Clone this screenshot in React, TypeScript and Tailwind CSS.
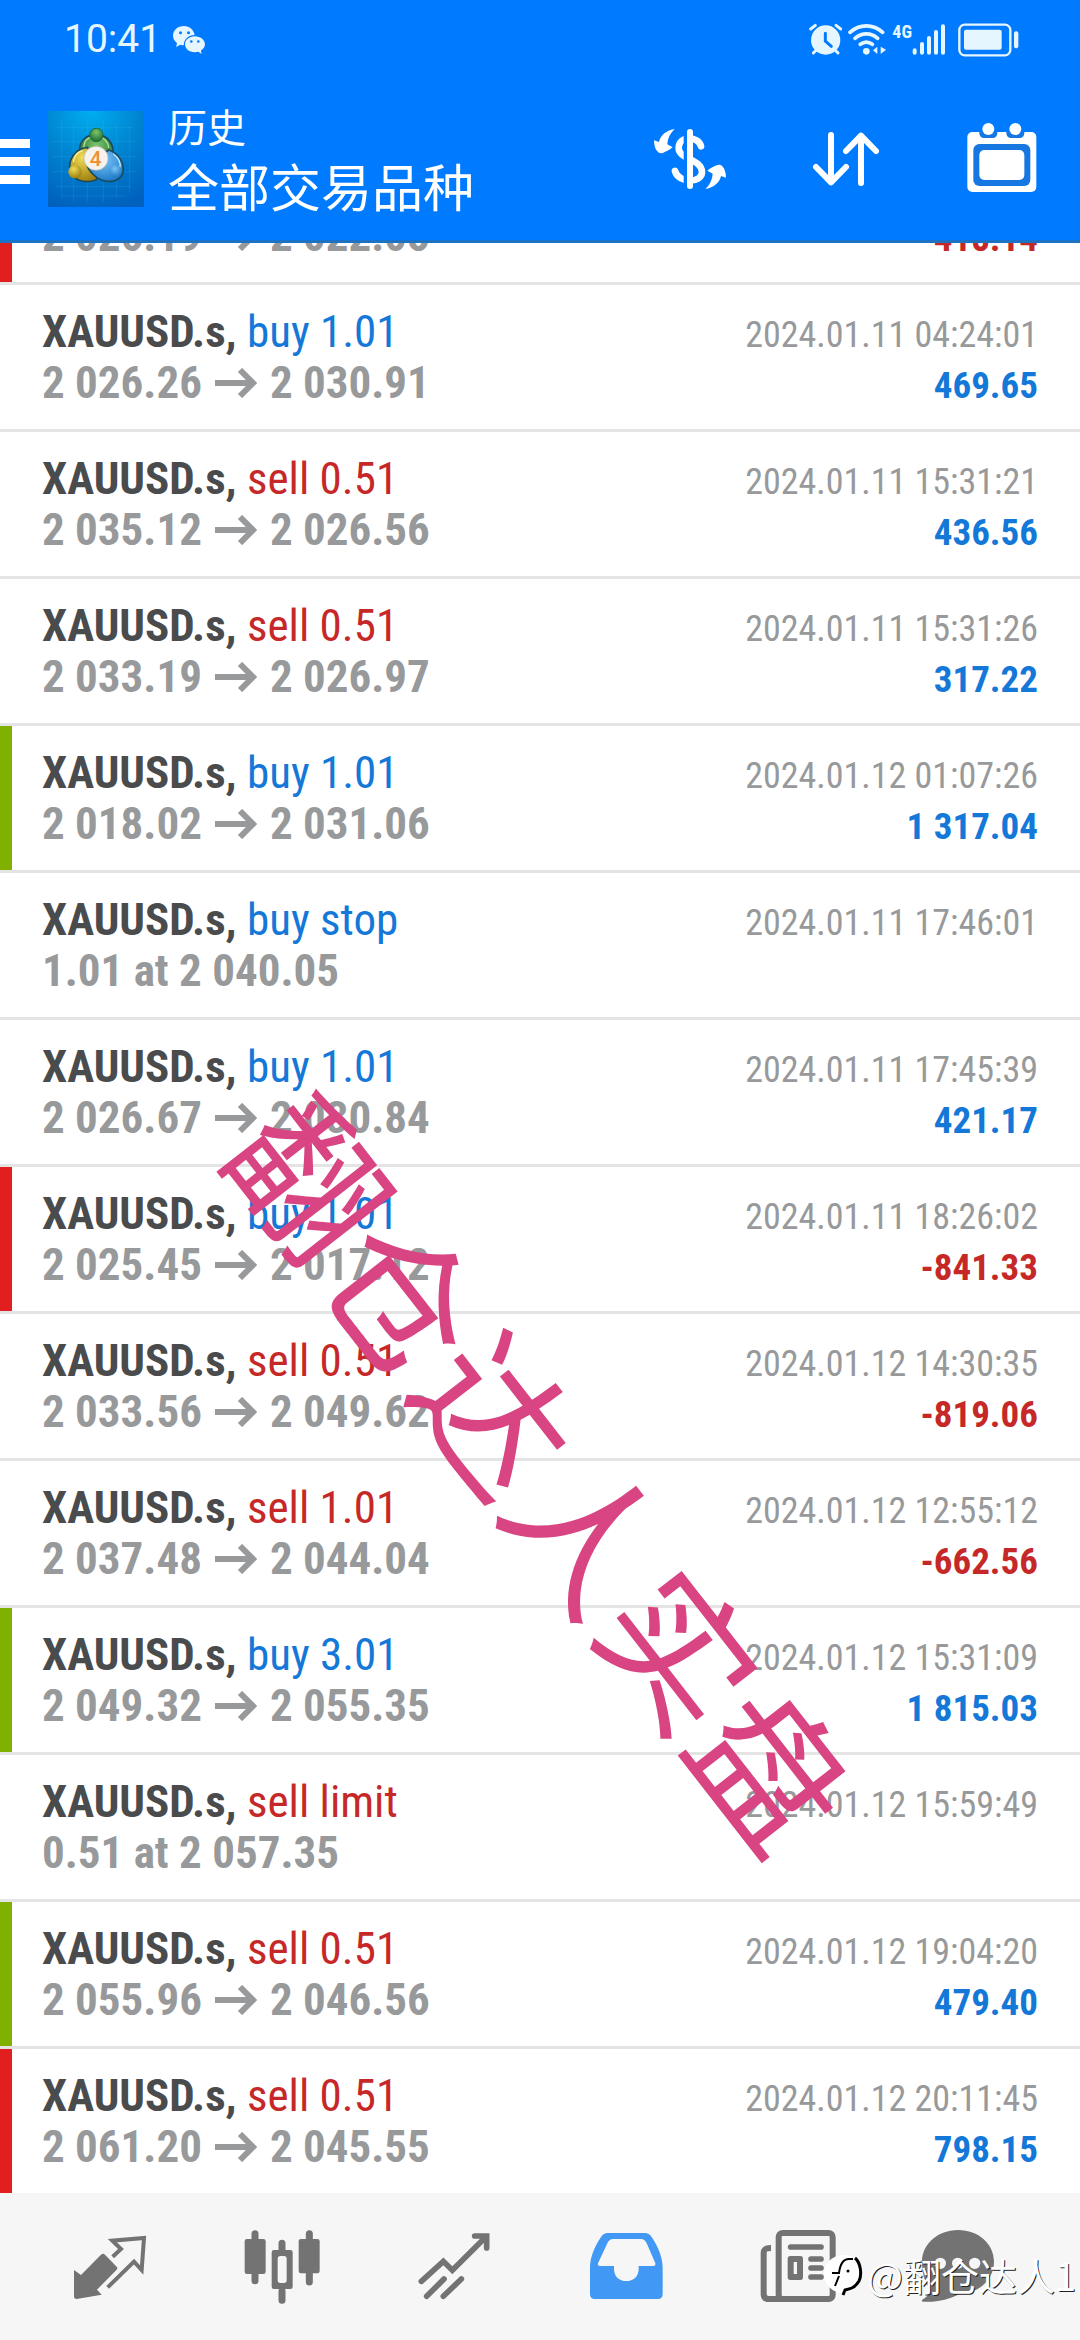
import type { ReactNode } from "react";

interface HistoryRow {
  id: number;
  side: string;
  tone: "buy" | "sell";
  from?: string;
  to?: string;
  note?: string;
  time: string;
  profit?: string;
  mark?: "tp" | "sl";
}

const history: HistoryRow[] = [
  { id: 1, side: "buy 1.01", tone: "buy", from: "2 026.19", to: "2 022.05", time: "2024.01.11 04:23:14", profit: "-418.14", mark: "sl" },
  { id: 2, side: "buy 1.01", tone: "buy", from: "2 026.26", to: "2 030.91", time: "2024.01.11 04:24:01", profit: "469.65" },
  { id: 3, side: "sell 0.51", tone: "sell", from: "2 035.12", to: "2 026.56", time: "2024.01.11 15:31:21", profit: "436.56" },
  { id: 4, side: "sell 0.51", tone: "sell", from: "2 033.19", to: "2 026.97", time: "2024.01.11 15:31:26", profit: "317.22" },
  { id: 5, side: "buy 1.01", tone: "buy", from: "2 018.02", to: "2 031.06", time: "2024.01.12 01:07:26", profit: "1 317.04", mark: "tp" },
  { id: 6, side: "buy stop", tone: "buy", note: "1.01 at 2 040.05", time: "2024.01.11 17:46:01" },
  { id: 7, side: "buy 1.01", tone: "buy", from: "2 026.67", to: "2 030.84", time: "2024.01.11 17:45:39", profit: "421.17" },
  { id: 8, side: "buy 1.01", tone: "buy", from: "2 025.45", to: "2 017.12", time: "2024.01.11 18:26:02", profit: "-841.33", mark: "sl" },
  { id: 9, side: "sell 0.51", tone: "sell", from: "2 033.56", to: "2 049.62", time: "2024.01.12 14:30:35", profit: "-819.06" },
  { id: 10, side: "sell 1.01", tone: "sell", from: "2 037.48", to: "2 044.04", time: "2024.01.12 12:55:12", profit: "-662.56" },
  { id: 11, side: "buy 3.01", tone: "buy", from: "2 049.32", to: "2 055.35", time: "2024.01.12 15:31:09", profit: "1 815.03", mark: "tp" },
  { id: 12, side: "sell limit", tone: "sell", note: "0.51 at 2 057.35", time: "2024.01.12 15:59:49" },
  { id: 13, side: "sell 0.51", tone: "sell", from: "2 055.96", to: "2 046.56", time: "2024.01.12 19:04:20", profit: "479.40", mark: "tp" },
  { id: 14, side: "sell 0.51", tone: "sell", from: "2 061.20", to: "2 045.55", time: "2024.01.12 20:11:45", profit: "798.15", mark: "sl" },
];

const StatusBar = () => (
  <div className="flex h-[75px] items-center justify-between pl-16 pr-[60px] pt-1 text-[#e6f6ff]">
    <div className="flex items-center gap-3">
      <span className="font-[Roboto,sans-serif] text-[39px] leading-none">10:41</span>
      <svg className="h-7 w-8" viewBox="0 0 32 28" fill="currentColor">
        <path d="M11 0C4.900 0 0 4.200 0 9.600c0 3 1.500 5.600 4 7.400L3.200 21l4-2.200c1.200.4 2.500.5 3.600.5C10.500 13.500 15.500 9 21.600 9 20.800 3.800 16.400 0 11 0z" />
        <path d="M21.700 10.200C16 10.200 12 13.900 12 18.300s4.200 8 9.700 8c1.300 0 2.500-.2 3.600-.5L28.600 28l-.7-3.600c2.500-1.500 4.100-3.700 4.100-6.200 0-4.400-4.700-8-10.300-8z" />
        <g fill="#007aff">
          <circle cx="7.500" cy="6.700" r="1.500" />
          <circle cx="15.500" cy="6.700" r="1.500" />
          <circle cx="18.300" cy="15.500" r="1.300" />
          <circle cx="25.300" cy="15.500" r="1.300" />
        </g>
      </svg>
    </div>
    <div className="flex items-center">
      <svg className="mr-1 h-9 w-9" viewBox="496 29 108 108" fill="none" strokeLinecap="round">
        <circle cx="549" cy="83" r="44" fill="currentColor" />
        <path d="M504 50l14-11M594 50l-14-11M512 122l12-12M586 122l-12-12" stroke="currentColor" strokeWidth="9" />
        <path d="M548 63v23l18 16" stroke="#007aff" strokeWidth="9" />
      </svg>
      <svg className="mr-1 h-9 w-10" viewBox="626 29 120 108" fill="none" stroke="currentColor" strokeWidth="11" strokeLinecap="round">
        <path d="M632 60C660 34 702 34 730 60M647 78c20-18 48-18 68 0M663 96c12-9 24-9 36 0" />
        <circle cx="681" cy="117" r="10" fill="currentColor" stroke="none" />
        <path d="M714 103v22l-13-11zM724 103v22l16-13z" fill="currentColor" stroke="none" />
      </svg>
      <span className="mb-4 font-['Roboto_Condensed',sans-serif] text-[18px] font-bold leading-none">4G</span>
      <svg className="mr-3 h-9 w-[34px]" viewBox="813 29 102 108" stroke="currentColor" strokeWidth="12" strokeLinecap="round">
        <path d="M821 114v7M843 95v26M864 77v44M885 59v62M906 42v79" />
      </svg>
      <svg className="h-9 w-[62px]" viewBox="948 29 186 108" fill="none">
        <rect x="952" y="37" width="153" height="92" rx="16" stroke="currentColor" strokeWidth="7" />
        <rect x="966" y="52" width="113" height="60" rx="6" fill="currentColor" />
        <rect x="1116" y="57" width="13" height="51" rx="6" fill="currentColor" />
      </svg>
    </div>
  </div>
);

const Logo = () => (
  <svg className="ml-[18px] size-24 shrink-0" viewBox="144 63 288 288" role="img" aria-label="MetaTrader 4">
    <defs>
      <radialGradient id="sky" cx="45%" cy="0%" r="105%">
        <stop offset="0" stopColor="#00aef0" />
        <stop offset="0.5" stopColor="#0083cf" />
        <stop offset="1" stopColor="#0060bd" />
      </radialGradient>
      <radialGradient id="green" cx="50%" cy="30%" r="70%">
        <stop offset="0" stopColor="#7cc56c" />
        <stop offset="1" stopColor="#1d6b32" />
      </radialGradient>
      <radialGradient id="gold" cx="40%" cy="30%" r="70%">
        <stop offset="0" stopColor="#efdc55" />
        <stop offset="1" stopColor="#a08010" />
      </radialGradient>
      <radialGradient id="blue" cx="45%" cy="30%" r="70%">
        <stop offset="0" stopColor="#7cc4f6" />
        <stop offset="1" stopColor="#1f7cc9" />
      </radialGradient>
    </defs>
    <rect x="144" y="63" width="288" height="288" fill="url(#sky)" />
    <path d="M165 112h235M155 155h250M155 200h250M155 245h250M165 290h230M185 318h190M185 85v240M220 100v235M262 90v245M310 90v245M350 100v225M388 110v200" stroke="#4cc0f2" strokeOpacity="0.25" strokeWidth="2" />
    <g stroke="#1c4a5c" strokeWidth="5">
      <path d="M240 190c-6-34 16-56 49-56s58 30 48 66c-6 22-16 34-28 42z" fill="url(#green)" />
      <path d="M262 172c-34 4-58 34-52 68 6 30 42 42 78 30l14-34z" fill="url(#gold)" />
      <path d="M326 180c28 8 50 40 42 70-10 30-52 30-78 12-16-12-24-22-28-34z" fill="url(#blue)" />
    </g>
    <path d="M252 172c0-22 14-32 36-32s36 14 38 34" fill="none" stroke="#a8e29c" strokeWidth="4" />
    <path d="M220 216c2-16 12-30 28-34" fill="none" stroke="#fff3a0" strokeWidth="4" />
    <path d="M340 192c14 10 22 26 20 40" fill="none" stroke="#c2e8ff" strokeWidth="4" />
    <circle cx="289" cy="135" r="20" fill="url(#green)" stroke="#1f6b36" strokeWidth="3" />
    <circle cx="225" cy="245" r="20" fill="url(#gold)" />
    <circle cx="346" cy="243" r="18" fill="url(#blue)" />
    <circle cx="288" cy="205" r="36" fill="#f6f3ef" stroke="#b9b6a8" strokeWidth="2" />
    <text x="287" y="227" textAnchor="middle" fontFamily="Roboto, sans-serif" fontSize="62" fontWeight="500" fill="#f09030">4</text>
  </svg>
);

const Header = () => (
  <header className="relative z-10 bg-[#007aff] text-white">
    <StatusBar />
    <div className="flex h-[168px] items-center border-b-[3px] border-[#1c72c4] pr-9 pt-[3px]">
      <button type="button" aria-label="菜单" className="flex w-[30px] flex-col gap-[9px] pt-1">
        <span className="h-[9px] bg-white" />
        <span className="h-[9px] bg-white" />
        <span className="h-[9px] bg-white" />
      </button>
      <Logo />
      <div className="ml-6 flex-1 pb-2 font-['Noto_Sans_CJK_SC',sans-serif]">
        <p className="text-[39px] leading-[60px]">历史</p>
        <h1 className="text-[51px] leading-[60px]">全部交易品种</h1>
      </div>
      <div className="flex gap-[72px]">
        <button type="button" aria-label="交易品种">
          <svg className="size-[84px]" viewBox="24 321 252 252" fill="none">
            <path d="M183 409C176 378 116 376 116 414C116 450 186 446 186 486C186 520 116 522 105 483" stroke="white" strokeWidth="20" strokeLinecap="round" />
            <path d="M131 366h14v164h-14z" fill="#007aff" />
            <path d="M150 366v162" stroke="white" strokeWidth="18" strokeLinecap="round" />
            <path d="M104 357C74 362 60 380 57 396L42 391C42 406 46 418 52 424C56 430 64 431 70 428C80 424 88 420 98 412L82 403C83 385 90 370 104 357Z" fill="white" />
            <path transform="rotate(180 150 447)" d="M104 357C74 362 60 380 57 396L42 391C42 406 46 418 52 424C56 430 64 431 70 428C80 424 88 420 98 412L82 403C83 385 90 370 104 357Z" fill="white" />
          </svg>
        </button>
        <button type="button" aria-label="排序">
          <svg className="size-[84px]" viewBox="492 321 252 252" fill="none" stroke="white" strokeWidth="18" strokeLinecap="round" strokeLinejoin="round">
            <path d="M573 375v142M528 471l45 46 45-46M663 519V377M618 423l45-46 45 46" />
          </svg>
        </button>
        <button type="button" aria-label="日期">
          <svg className="size-[84px]" viewBox="956 321 252 252">
            <rect x="978" y="366" width="207" height="180" rx="15" fill="white" />
            <path d="M1014 360h54v10a14 14 0 0 1-14 14h-26a14 14 0 0 1-14-14zM1095 360h54v10a14 14 0 0 1-14 14h-26a14 14 0 0 1-14-14z" fill="#1777e0" />
            <path d="M1010 340h62v26h-62zM1091 340h62v26h-62z" fill="#007aff" />
            <circle cx="1041" cy="357" r="18" fill="white" />
            <circle cx="1122" cy="357" r="18" fill="white" />
            <rect x="996" y="402" width="171" height="126" rx="18" fill="#1777e0" />
            <rect x="1014" y="420" width="135" height="90" rx="15" fill="white" />
          </svg>
        </button>
      </div>
    </div>
  </header>
);

const Row = ({ row }: { row: HistoryRow }) => {
  const isLoss = row.profit?.startsWith("-");

  return (
    <li className="flex h-[147px] border-b-[3px] border-[#e4e4e4] last:h-36 last:border-b-0">
      <span className={`w-3 ${row.mark === "tp" ? "bg-[#80b000]" : row.mark === "sl" ? "bg-[#e21f1f]" : ""}`} />
      <div className="flex-1 pl-[30px] pr-[42px] pt-[21px]">
        <div className="flex items-baseline justify-between text-[45px] leading-[51px]">
          <p>
            <span className="font-bold text-[#4a4b4d]">{"XAUUSD.s, "}</span>
            <span className={row.tone === "buy" ? "text-[#1478d8]" : "text-[#c62828]"}>{row.side}</span>
          </p>
          <time className="text-[36px] leading-none text-[#97999b]">{row.time}</time>
        </div>
        <div className="flex items-baseline justify-between text-[45px] font-bold leading-[51px] text-[#97999b]">
          {row.note ? (
            <p>{row.note}</p>
          ) : (
            <p className="flex items-center gap-[13px]">
              {row.from}
              <svg className="h-[30px] w-[42px]" viewBox="0 0 42 30" fill="none" stroke="currentColor" strokeWidth="6">
                <path d="M0 15h38M25 2l13 13-13 13" />
              </svg>
              {row.to}
            </p>
          )}
          {row.profit && (
            <p className={`text-[37px] leading-none ${isLoss ? "text-[#c62828]" : "text-[#1478d8]"}`}>{row.profit}</p>
          )}
        </div>
      </div>
    </li>
  );
};

const Tab = ({ label, active, viewBox, children, className = "" }: { label: string; active?: boolean; viewBox: string; children: ReactNode; className?: string }) => (
  <button
    type="button"
    aria-label={label}
    className={`flex items-center justify-center ${active ? "text-[#4299f5]" : "text-[#737373]"} ${className}`}
  >
    <svg className="size-[76px]" viewBox={viewBox} fill="currentColor">
      {children}
    </svg>
  </button>
);

const BottomNav = () => (
  <nav className="relative grid h-[147px] grid-cols-6 bg-[#f6f6f6] px-6">
    <Tab label="行情" viewBox="36 54 228 228">
      <path d="M42 177l21 15 60-61q6-5 12 0l35 36q4 5 0 9l-59 60 14 15-75 13q-8 0-8-8z" />
      <path d="M158 137l25-23-26-25 95-8-7 96-23-25-79 77" fill="none" stroke="currentColor" strokeWidth="12" />
    </Tab>
    <Tab label="图表" viewBox="550 54 228 228">
      <rect x="552" y="84" width="63" height="105" rx="7" />
      <rect x="714" y="84" width="63" height="103" rx="7" />
      <path fillRule="evenodd" d="M640 117h49a7 7 0 0 1 7 7v103a7 7 0 0 1-7 7h-49a7 7 0 0 1-7-7V124a7 7 0 0 1 7-7zm19 18a8 8 0 0 0-8 8v65a8 8 0 0 0 8 8h11a8 8 0 0 0 8-8v-65a8 8 0 0 0-8-8z" />
      <path d="M583 68v20M583 185v24M746 68v20M746 185v28M664 97v22M664 240v28" fill="none" stroke="currentColor" strokeWidth="21" strokeLinecap="round" />
    </Tab>
    <Tab label="交易" viewBox="1066 54 228 228">
      <path d="M1082 211l66-60 27 27 95-95M1098 256l52-52M1148 256l54-52" fill="none" stroke="currentColor" strokeWidth="17" strokeLinecap="round" />
      <path d="M1242 75h36v36" fill="none" stroke="currentColor" strokeWidth="17" strokeLinecap="round" />
      <path d="M1250 75h28v28z" />
    </Tab>
    <Tab label="历史" active viewBox="54 54 228 228">
      <path fillRule="evenodd" d="M113 66h112q12 0 20 12c20 30 33 62 33 92v80q0 14-14 14H74q-14 0-14-14v-80c0-30 13-62 33-92q8-12 20-12zm-2 33L84 157q-2 8 6 8h42v8c0 24 16 37 37 37s37-13 37-37v-8h44q8 0 6-8l-25-58q-6-15-18-15h-84q-12 0-18 15z" />
    </Tab>
    <Tab label="新闻" viewBox="576 54 228 228">
      <rect x="632" y="66" width="162" height="198" rx="12" fill="none" stroke="currentColor" strokeWidth="18" />
      <path d="M609 111c-16 0-22 4-22 16v122q0 15 15 15h180" fill="none" stroke="currentColor" strokeWidth="18" />
      <path d="M668 108h91M729 144h30M729 171h30M729 198h30" fill="none" stroke="currentColor" strokeWidth="17" strokeLinecap="round" />
      <path fillRule="evenodd" d="M667 135h30q8 0 8 8v56q0 8-8 8h-30q-8 0-8-8v-56q0-8 8-8zm10 18v36h10v-36z" />
    </Tab>
    <Tab label="消息" viewBox="1051 54 228 228" className="pr-6">
      <path d="M1165 57c62 0 108 42 108 95s-46 96-104 97c-30 16-68 26-110 23-4-1-3-5 2-8 14-8 20-18 21-30-16-18-25-46-25-82 0-53 48-95 108-95z" />
      <g fill="#f6f6f6">
        <circle cx="1112" cy="157" r="17" />
        <circle cx="1164" cy="157" r="17" />
        <circle cx="1215" cy="157" r="17" />
      </g>
    </Tab>
    <div className="pointer-events-none absolute bottom-10 right-1 flex items-center text-white">
      <svg className="h-[50px] w-11" viewBox="0 0 44 50">
        <circle cx="20" cy="24" r="19" fill="white" />
        <path d="M9 23h7c1-8 4-14 10-14h4M12 36l4-10" fill="none" stroke="black" strokeWidth="2" />
        <path d="M32 8c6 5 7 17 4 23-4 7-9 8-14 9l-2 5" fill="none" stroke="black" strokeWidth="3" />
        <circle cx="25" cy="21" r="1.500" fill="black" />
      </svg>
      <span className="font-['Noto_Sans_CJK_SC',sans-serif] text-[38px] leading-[50px] [text-shadow:1px_1px_0_#222]">@翻仓达人1</span>
    </div>
  </nav>
);

const App = () => (
  <div className="relative flex min-h-screen flex-col overflow-hidden bg-white">
    <Header />
    {/* The list is scrolled, so its first entry sits partly under the header */}
    <main className="-mt-[105px] flex-1 font-['Roboto_Condensed',Roboto,sans-serif]">
      <ul>
        {history.map((row) => (
          <Row key={row.id} row={row} />
        ))}
      </ul>
    </main>
    <BottomNav />
    <p className="pointer-events-none absolute left-1/2 top-[63%] -translate-x-1/2 -translate-y-1/2 rotate-52 whitespace-nowrap pb-4 font-['Noto_Sans_CJK_SC',sans-serif] text-[150px] leading-none text-[#d84582]">
      翻仓达人实盘
    </p>
  </div>
);

export default App;
